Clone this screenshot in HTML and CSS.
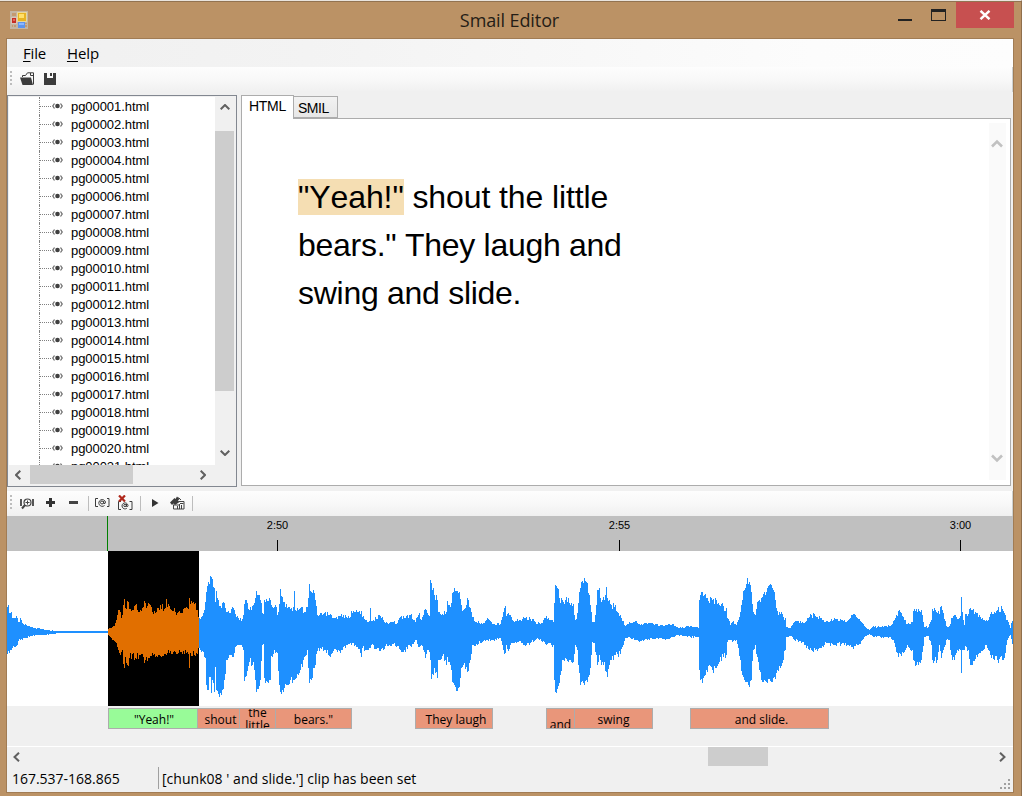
FILE: index.html
```html
<!DOCTYPE html>
<html lang="en">
<head>
<meta charset="utf-8">
<title>Smail Editor</title>
<link rel="stylesheet" href="styles.css">
</head>
<body>
<div class="window">
  <header class="titlebar">
    <svg class="app-icon" width="18" height="18" viewBox="0 0 18 18" shape-rendering="crispEdges">
      <rect width="18" height="18" fill="#c3b5a3"/>
      <path d="M2 2h4v3H2zM2 14h1v2H2zM4 14h2v2H4zM15 14h2v2h-2zM15 12h2v1h-2z" fill="#c49a70"/>
      <rect x="1" y="6" width="6" height="7" fill="#d8c4b8"/><rect x="2" y="7" width="4" height="5" fill="#c62e25"/><rect x="3" y="8" width="2" height="2" fill="#e3685c"/>
      <rect x="7" y="1" width="10" height="10" fill="#e8d79a"/><rect x="8" y="2" width="8" height="8" fill="#e8b423"/><rect x="9" y="3" width="5" height="4" fill="#ffe06b"/>
      <rect x="8" y="11" width="7" height="6" fill="#5e94ed"/><rect x="9" y="12" width="5" height="2" fill="#8bb8ff"/>
    </svg>
    <h1 class="title">Smail Editor</h1>
    <div class="win-buttons">
      <svg class="win-min" width="14" height="2"><rect width="14" height="2" fill="#222"/></svg>
      <svg class="win-max" width="15" height="12" shape-rendering="crispEdges"><path d="M0 0h15v12H0zM1 3v8h13V3z" fill="#222" fill-rule="evenodd"/></svg>
      <div class="win-close"><svg width="12" height="10" viewBox="0 0 12 10"><path d="M1.500 .8l9 8.400M10.500 .8l-9 8.400" stroke="#fff" stroke-width="2.400"/></svg></div>
    </div>
  </header>
  <main class="client">
    <nav class="menu"><span class="menu-file"><u>F</u>ile</span><span class="menu-help"><u>H</u>elp</span></nav>
    <div class="toolbar main-tools">
      <span class="grip"></span>
      <svg class="ico-open" width="15" height="13" viewBox="0 0 15 13"><path d="M0 5.500h11l2 7.500H2.500z" fill="#3c3c3c"/><path d="M2.500 5V3.500h3L7.500 .8h6v11.700" fill="none" stroke="#3c3c3c"/><path d="M10.500 1v2.500h3" fill="none" stroke="#3c3c3c"/></svg>
      <svg class="ico-save" width="12" height="12" viewBox="0 0 12 12" shape-rendering="crispEdges"><path d="M0 0h3v5h6V0h2l1 1v11H0zM6 0h2v3H6z" fill="#3c3c3c"/></svg>
    </div>
    <section class="workspace">
      <div class="tree">
        <div class="tree-top">
          <ul class="tree-list" id="tree"></ul>
          <div class="vscroll">
            <svg width="10" height="6" viewBox="0 0 10 6"><path d="M.7 5.300L5 1l4.300 4.300" class="arrow"/></svg>
            <div class="vthumb"></div>
            <svg class="down" width="10" height="6" viewBox="0 0 10 6"><path d="M.7 .7L5 5 9.300 .7" class="arrow"/></svg>
          </div>
        </div>
        <div class="hscroll">
          <svg width="6" height="10" viewBox="0 0 6 10"><path d="M5.300 .7L1 5l4.300 4.300" class="arrow"/></svg>
          <div class="hthumb"></div>
          <svg class="right" width="6" height="10" viewBox="0 0 6 10"><path d="M.7 .7L5 5 .7 9.300" class="arrow"/></svg>
        </div>
      </div>
      <div class="tabs">
        <div class="tab-row"><span class="tab active">HTML</span><span class="tab">SMIL</span></div>
        <div class="page">
          <div class="page-text"><span class="first-line"><mark>"Yeah!"</mark> shout the little</span><br>bears." They laugh and<br>swing and slide.</div>
          <div class="page-scroll">
            <svg width="12" height="9" viewBox="0 0 12 9"><path d="M1 7.500L6 2.500l5 5" class="arrow pale"/></svg>
            <svg width="12" height="9" viewBox="0 0 12 9"><path d="M1 1.500l5 5 5-5" class="arrow pale"/></svg>
          </div>
        </div>
      </div>
    </section>
    <div class="toolbar wave-tools">
      <span class="grip"></span>
      <svg class="ico-zoom" width="14" height="13" viewBox="0 0 14 13" fill="none" stroke="#444"><path d="M1 1v7M13 1v7" stroke-width="1.800"/><circle cx="7.500" cy="4.500" r="3.500" stroke-width="1.200"/><path d="M5.500 4.500h4M7.500 2.500v4"/><path d="M5 7L2 10.500" stroke-width="2"/></svg>
      <svg class="ico-plus" width="9" height="9" shape-rendering="crispEdges"><path d="M3 0h3v3h3v3H6v3H3V6H0V3h3z" fill="#333"/></svg>
      <svg class="ico-minus" width="9" height="3"><rect width="9" height="3" fill="#444"/></svg>
      <span class="sep s1"></span>
      <svg class="ico-clip" width="15" height="10" viewBox="0 0 15 10" fill="none" stroke="#3c3c3c"><path d="M3 .5H.5v8H3M12 .5h2v8H12"/><circle cx="7" cy="4.500" r="1.500"/><path d="M8.700 3v2.500q1.800.7 1.800-1.500A3.400 3.400 0 1 0 9.500 7.500"/></svg>
      <svg class="ico-unclip" width="16" height="15" viewBox="0 0 16 15" fill="none" stroke="#3c3c3c"><path d="M3 6.500H.5v8H3M11.500 6.500h2.500v8h-2.500"/><circle cx="7" cy="10.500" r="1.200"/><path d="M8.500 9v2.500q1.500.5 1.500-1A3 3 0 1 0 8.800 13.300"/><path d="M1 .5l6 6M7 .5l-6 6" stroke="#b0281c" stroke-width="2.200"/></svg>
      <span class="sep s2"></span>
      <svg class="ico-play" width="7" height="8"><path d="M0 0l6.500 4L0 8z" fill="#333"/></svg>
      <svg class="ico-auto" width="15" height="14" viewBox="0 0 15 14"><path d="M0 6.500L4.500 2l1 1L7 .5 9.500 3 8 4.500 9.500 6 5 9 3.500 7.500 2 9z" fill="#3c3c3c"/><path d="M8.500 1.500l2.500 2.500M3.500 8.500v4.500h10.500v-7.500h-5" fill="none" stroke="#444"/><path d="M4 9h5.500M10 7.500h3.500M7.500 10v3M9.500 8v5M11.500 9v4" stroke="#444"/></svg>
      <span class="sep s3"></span>
    </div>
    <section class="ruler">
      <span class="cursor"></span>
      <span class="mark" style="left:270px">2:50</span>
      <span class="mark" style="left:612px">2:55</span>
      <span class="mark" style="left:953px">3:00</span>
    </section>
    <svg class="wave" id="wave" width="1006" height="155" viewBox="7 551 1006 155" shape-rendering="crispEdges">
      <rect x="108" y="551" width="91" height="155" fill="#000"/>
    </svg>
    <section class="clips">
      <div class="clip current" style="margin-left:101px;width:90px"><span class="nudge-s">"Yeah!"</span></div>
      <div class="clip" style="width:43px"><span class="nudge">shout</span></div>
      <div class="clip two" style="width:37px"><span>the<br>little</span></div>
      <div class="clip" style="width:77px">bears."</div>
      <div class="clip" style="margin-left:63px;width:78px"><span class="nudge">They laugh</span></div>
      <div class="clip low" style="margin-left:53px;width:29px">and</div>
      <div class="clip" style="width:79px">swing</div>
      <div class="clip" style="margin-left:37px;width:139px"><span class="nudge">and slide.</span></div>
    </section>
    <div class="timeline-scroll">
      <svg width="7" height="10" viewBox="0 0 7 10"><path d="M6 .7L1.500 5 6 9.300" class="arrow"/></svg>
      <div class="timeline-thumb"></div>
      <svg class="right" width="7" height="10" viewBox="0 0 7 10"><path d="M1 .7L5.500 5 1 9.300" class="arrow"/></svg>
    </div>
    <footer class="status">
      <span class="range">167.537-168.865</span>
      <span class="message">[chunk08 ' and slide.'] clip has been set</span>
      <svg class="size-grip" width="10" height="10" shape-rendering="crispEdges"><path d="M8 0h2v2H8zM4 4h2v2H4zM8 4h2v2H8zM0 8h2v2H0zM4 8h2v2H4zM8 8h2v2H8z" fill="#a0a0a0"/></svg>
    </footer>
  </main>
</div>
<script src="app.js"></script>
</body>
</html>
```

FILE: styles.css
```css
* { box-sizing: border-box; }
body { margin: 0; font-family: "Liberation Sans", Arial, sans-serif; color: #000; font-kerning: none; }
svg { display: block; flex: none; }
.window { width: 1022px; height: 796px; background: #bb9265; border-top: 1px solid #e9e4de; border-right: 1px solid #8f6f4c; overflow: hidden; display: flex; flex-direction: column; }
.titlebar { height: 37px; flex: none; display: flex; border-top: 1px solid #927351; position: relative; justify-content: space-between; }
.app-icon { margin: 9px 0 0 10px; }
.title { position: absolute; left: 0; right: 2px; top: 5px; margin: 0; text-align: center; font: 400 18px/26px "Open Sans", sans-serif; letter-spacing: -0.1px; color: #241d16; }
.win-buttons { display: flex; margin-right: 7px; }
.win-min { margin: 17px 19px 0 0; }
.win-max { margin: 7px 10px 0 0; }
.win-close { width: 58px; height: 26px; background: #c75050; display: flex; justify-content: center; padding: 8px 1px 0 0; }
.client { width: 1008px; height: 755px; margin-left: 6px; border: 1px solid #a17c54; background: #f0f0f0; display: flex; flex-direction: column; }
.menu { height: 28px; flex: none; display: flex; gap: 21px; padding: 4px 0 0 16px; font: 15px/21px "Open Sans", sans-serif; background: linear-gradient(90deg, #f0f0f0, #f3f3f3 30%, #fcfcfc 80%, #fdfdfd); }
.menu u { text-underline-offset: 2px; text-decoration-thickness: 1px; text-decoration-skip-ink: none; }
.menu-file { letter-spacing: -0.2px; }
.menu-help { letter-spacing: -0.05px; }
.toolbar { height: 25px; flex: none; display: flex; align-items: flex-start; background: linear-gradient(#fdfdfd, #f8f8f8 50%, #f0f0f0); border-right: 1px solid #ccd0d0; }
.grip { width: 2px; height: 14px; margin: 4px 0 0 3px; background: repeating-linear-gradient(#bdbdbd 0 2px, transparent 2px 4px); }
.ico-open { margin: 5px 0 0 8px; }
.ico-save { margin: 6px 0 0 9px; }
.workspace { height: 399px; flex: none; padding-top: 3px; display: flex; gap: 4px; }
.tree { width: 230px; height: 392px; border: 1px solid #828790; padding: 1px; background: #f0f0f0; }
.tree-top { height: 368px; display: flex; }
.tree-list { width: 206px; height: 368px; margin: 0; padding: 0 0 0 30px; list-style: none; background: #fff; overflow: hidden; flex: none; }
.tree-item { height: 18px; display: flex; align-items: center; font-size: 13px; line-height: 18px; border-left: 1px dotted #808080; letter-spacing: -0.06px; }
.tree-item::before { content: ""; width: 11px; border-top: 1px dotted #808080; }
.tree-item svg { margin: 0 8px 0 1px; }
.tree-item span { padding-top: 2px; }
.arrow { fill: none; stroke: #606060; stroke-width: 2; }
.pale { stroke: #c1c1c1; stroke-width: 2.6; }
.vscroll { width: 19px; display: flex; flex-direction: column; align-items: center; padding-top: 7px; }
.vthumb { width: 19px; height: 260px; margin-top: 21px; background: #cdcdcd; }
.vscroll .down { margin-top: 59px; }
.hscroll { height: 20px; display: flex; align-items: center; padding-left: 6px; }
.hthumb { width: 103px; height: 19px; background: #cdcdcd; margin-left: 9px; align-self: flex-start; }
.hscroll .right { margin-left: 67px; }
.tabs { width: 770px; height: 391px; display: flex; flex-direction: column; }
.tab-row { height: 23px; flex: none; display: flex; align-items: flex-end; font-size: 14px; z-index: 1; }
.tab { height: 22px; width: 44px; padding: 3px 0 0 4px; border: 1px solid #acacac; border-left: 0; background: linear-gradient(#f2f2f2, #e7e7e7); line-height: 16px; letter-spacing: -0.5px; }
.tab.active { height: 24px; width: 53px; margin-bottom: -1px; padding: 2px 0 0 7px; border: 1px solid #acacac; border-bottom: 0; background: #fff; letter-spacing: -0.3px; }
.page { flex: 1; border: 1px solid #acacac; background: #fff; display: flex; justify-content: space-between; padding: 4px 4px 5px 56px; }
.page-text { padding-top: 50px; font-size: 32px; line-height: 48px; letter-spacing: -0.28px; white-space: nowrap; }
.first-line { letter-spacing: -0.1px; }
.page-text mark { background: #f5deb3; color: #000; }
.page-scroll { width: 17px; background: #fafafa; display: flex; flex-direction: column; justify-content: space-between; align-items: center; padding: 16px 1px 17px 0; }
.ico-zoom { margin: 7px 0 0 8px; }
.ico-plus { margin: 7px 0 0 12px; }
.ico-minus { margin: 10px 0 0 14px; }
.sep { width: 1px; height: 15px; margin-top: 5px; background: #bdbdbd; }
.s1 { margin-left: 10px; }
.ico-clip { margin: 7px 0 0 6px; }
.ico-unclip { margin: 4px 0 0 8px; }
.s2 { margin-left: 6px; }
.ico-play { margin: 8px 0 0 11px; }
.ico-auto { margin: 5px 0 0 11px; }
.s3 { margin-left: 7px; }
.ruler { height: 35px; flex: none; background: #c0c0c0; position: relative; }
.cursor { position: absolute; left: 100px; top: 0; width: 1px; height: 35px; background: #008000; }
.mark { position: absolute; top: 3px; height: 32px; width: 40px; margin-left: -20px; padding-left: 1px; text-align: center; font-size: 11px; line-height: 13px; background: linear-gradient(#000, #000) 20px 21px / 1px 11px no-repeat; }
.wave { background: #fff; }
.clips { height: 40px; flex: none; display: flex; padding-top: 2px; }
.clip { height: 21px; flex: none; border: 1px solid #acacac; background: #e9967a; font: 12px/22px "Open Sans", sans-serif; text-align: center; overflow: hidden; white-space: nowrap; }
.clip + .clip:not([style*="margin"]) { margin-left: -1px; }
.clip.current { background: #98fb98; }
.clip.two { line-height: 13px; display: flex; justify-content: center; align-items: center; }
.clip.low { line-height: 31px; }
.nudge { padding-left: 4px; }
.nudge-s { padding-left: 2px; }
.timeline-scroll { height: 21px; flex: none; border-top: 1px solid #fff; display: flex; align-items: center; padding: 0 7px 0 6px; }
.timeline-thumb { width: 60px; height: 19px; margin-left: 688px; align-self: flex-start; background: #cdcdcd; }
.timeline-scroll .right { margin-left: auto; }
.status { height: 25px; flex: none; display: flex; font: 14px/21px "Open Sans", sans-serif; padding-left: 5px; }
.range { width: 146px; padding-top: 1px; letter-spacing: -0.02px; }
.message { border-left: 1px solid #a0a0a0; height: 22px; padding: 1px 0 0 3px; letter-spacing: 0.03px; }
.size-grip { margin: 12px 3px 0 auto; }
```

FILE: app.js
```js
const eye = '<svg width="11" height="8" viewBox="0 0 11 8"><circle cx="5.500" cy="4" r="2.300" fill="#404040"/><path d="M2.500 1.500L.8 4l1.700 2.500M8.500 1.500L10.200 4 8.500 6.500" fill="none" stroke="#707070" stroke-width="1.300"/></svg>';
const tree = document.getElementById('tree');
for (let i = 1; i <= 21; i++) {
  const li = document.createElement('li');
  li.className = 'tree-item';
  li.innerHTML = eye + '<span>pg' + String(i).padStart(5, '0') + '.html</span>';
  tree.appendChild(li);
}

// Peaks of the audio envelope: x, upper y, lower y.
const peaks = `7 607 654,10 613 650,13 618 646,17 618 645,18 622 641,20 618 640,22 623 640,24 625 638,30 627 636,35 628 635,45 630 635,57 631 633,107 631 633,
108 629 635,114 626 641,116 620 643,119 610 653,121 618 652,122 615 650,123 605 664,124 599 668,125 608 657,128 602 666,129 609 658,132 610 654,135 605 658,139 612 655,145 603 660,147 606 661,150 605 656,153 614 655,158 608 655,160 605 656,165 608 654,166 599 655,167 607 653,171 610 654,180 613 652,187 608 652,188 609 654,189 598 668,190 604 653,194 604 655,197 610 654,198 617 648,
199 618 648,203 613 652,205 602 658,206 592 685,208 582 690,209 584 677,210 576 677,211 577 693,212 579 680,214 588 692,215 602 667,216 591 690,218 600 694,220 606 693,222 603 690,224 603 680,226 612 660,229 613 655,232 607 657,235 614 647,238 618 645,241 621 645,243 615 650,244 604 681,246 600 676,249 610 662,253 605 662,256 591 692,260 600 680,262 613 645,263 614 644,264 600 678,268 601 683,270 600 680,271 605 656,275 605 653,277 615 653,279 604 685,280 589 692,282 597 690,284 602 688,288 607 685,290 609 680,293 607 680,294 591 680,295 610 679,296 611 678,300 608 670,305 612 656,307 607 650,308 598 668,309 584 683,311 592 680,313 590 668,315 600 665,317 615 651,320 613 648,325 612 650,328 615 655,330 614 657,333 618 651,340 616 653,346 617 645,352 613 643,358 612 649,361 611 657,362 617 648,365 620 650,369 621 648,370 608 648,371 621 645,380 616 651,385 623 646,392 622 644,397 623 646,400 617 650,404 618 650,410 615 646,415 622 640,419 613 647,421 620 645,425 609 658,428 615 650,429 616 652,430 580 660,431 583 679,434 595 668,437 600 678,438 612 660,442 614 656,445 614 660,446 612 665,447 601 657,450 607 665,452 593 682,455 591 687,459 592 687,461 605 668,463 610 665,467 598 672,470 608 660,472 617 645,476 622 644,483 623 641,487 618 640,492 624 640,500 624 638,503 612 650,505 606 653,506 616 645,508 613 651,510 615 645,514 622 643,520 620 641,525 618 646,530 619 643,535 622 640,540 624 639,545 618 644,548 618 643,551 620 645,553 622 645,554 603 680,555 585 692,557 588 689,560 603 675,562 600 660,565 600 658,568 598 662,570 605 660,573 604 662,575 620 645,577 613 650,578 603 665,580 588 685,584 578 685,586 582 680,589 595 675,591 612 655,592 622 642,594 622 643,596 605 655,597 590 665,599 588 655,600 598 660,602 600 662,604 600 662,606 587 672,607 598 677,609 600 665,611 605 660,614 607 655,620 615 654,623 621 645,625 626 638,630 623 638,635 621 640,640 625 641,648 623 639,660 625 638,665 625 640,672 624 637,678 628 635,690 626 637,696 627 637,698 628 637,699 600 670,700 595 680,702 592 683,705 594 675,708 601 666,712 600 670,716 600 668,718 603 664,720 606 657,726 608 655,727 618 642,730 625 640,732 622 642,736 625 640,738 620 648,740 612 660,742 600 675,744 590 680,747 578 682,749 582 687,751 592 680,753 612 650,755 615 645,757 602 657,759 600 670,761 598 680,766 592 682,771 585 682,773 590 678,775 600 679,777 611 670,780 614 668,783 617 660,785 618 650,786 627 637,790 628 636,794 622 640,800 621 641,805 622 645,811 615 650,815 616 650,820 618 648,826 621 643,835 619 645,843 621 643,848 620 645,853 614 649,857 618 645,862 623 640,866 628 636,869 630 634,872 627 636,880 627 637,890 626 637,894 620 643,896 615 652,898 611 657,901 613 656,904 620 652,907 624 645,912 622 650,913 611 660,914 609 661,918 609 665,921 610 660,922 615 652,924 627 637,928 627 636,931 620 645,932 609 660,934 608 661,937 613 660,939 614 645,941 606 658,943 613 650,946 626 640,949 626 640,951 618 655,954 615 660,957 619 650,960 616 650,961 597 673,962 612 650,964 625 650,965 614 646,968 614 650,970 608 665,972 610 665,976 613 655,980 617 653,985 621 645,988 620 650,991 612 658,997 610 660,1002 609 660,1004 613 658,1007 620 640,1010 628 635,1012 620 643`
  .split(',').map(p => p.trim().split(' ').map(Number));

let seed = 17;
const noise = () => { seed = (seed * 16807) % 2147483647; return seed / 2147483647 - 0.5; };
function column(x) {
  let i = 0;
  while (i < peaks.length - 2 && peaks[i + 1][0] <= x) i++;
  const a = peaks[i], b = peaks[i + 1];
  if (x === a[0]) return [a[1], a[2]];
  const t = (x - a[0]) / (b[0] - a[0]);
  return [1, 2].map(k => {
    const y = a[k] + (b[k] - a[k]) * t;
    return Math.round(y + noise() * Math.min(8, Math.abs(y - 632) * 0.32));
  });
}
function draw(from, to, color) {
  let d = '';
  for (let x = from; x < to; x++) {
    const [top, bottom] = column(x);
    d += `M${x} ${top}h1V${bottom}h-1z`;
  }
  const path = document.createElementNS('http://www.w3.org/2000/svg', 'path');
  path.setAttribute('d', d);
  path.setAttribute('fill', color);
  document.getElementById('wave').appendChild(path);
}
draw(7, 108, '#1e90ff');
draw(108, 199, '#e16f00');
draw(199, 1013, '#1e90ff');
```
